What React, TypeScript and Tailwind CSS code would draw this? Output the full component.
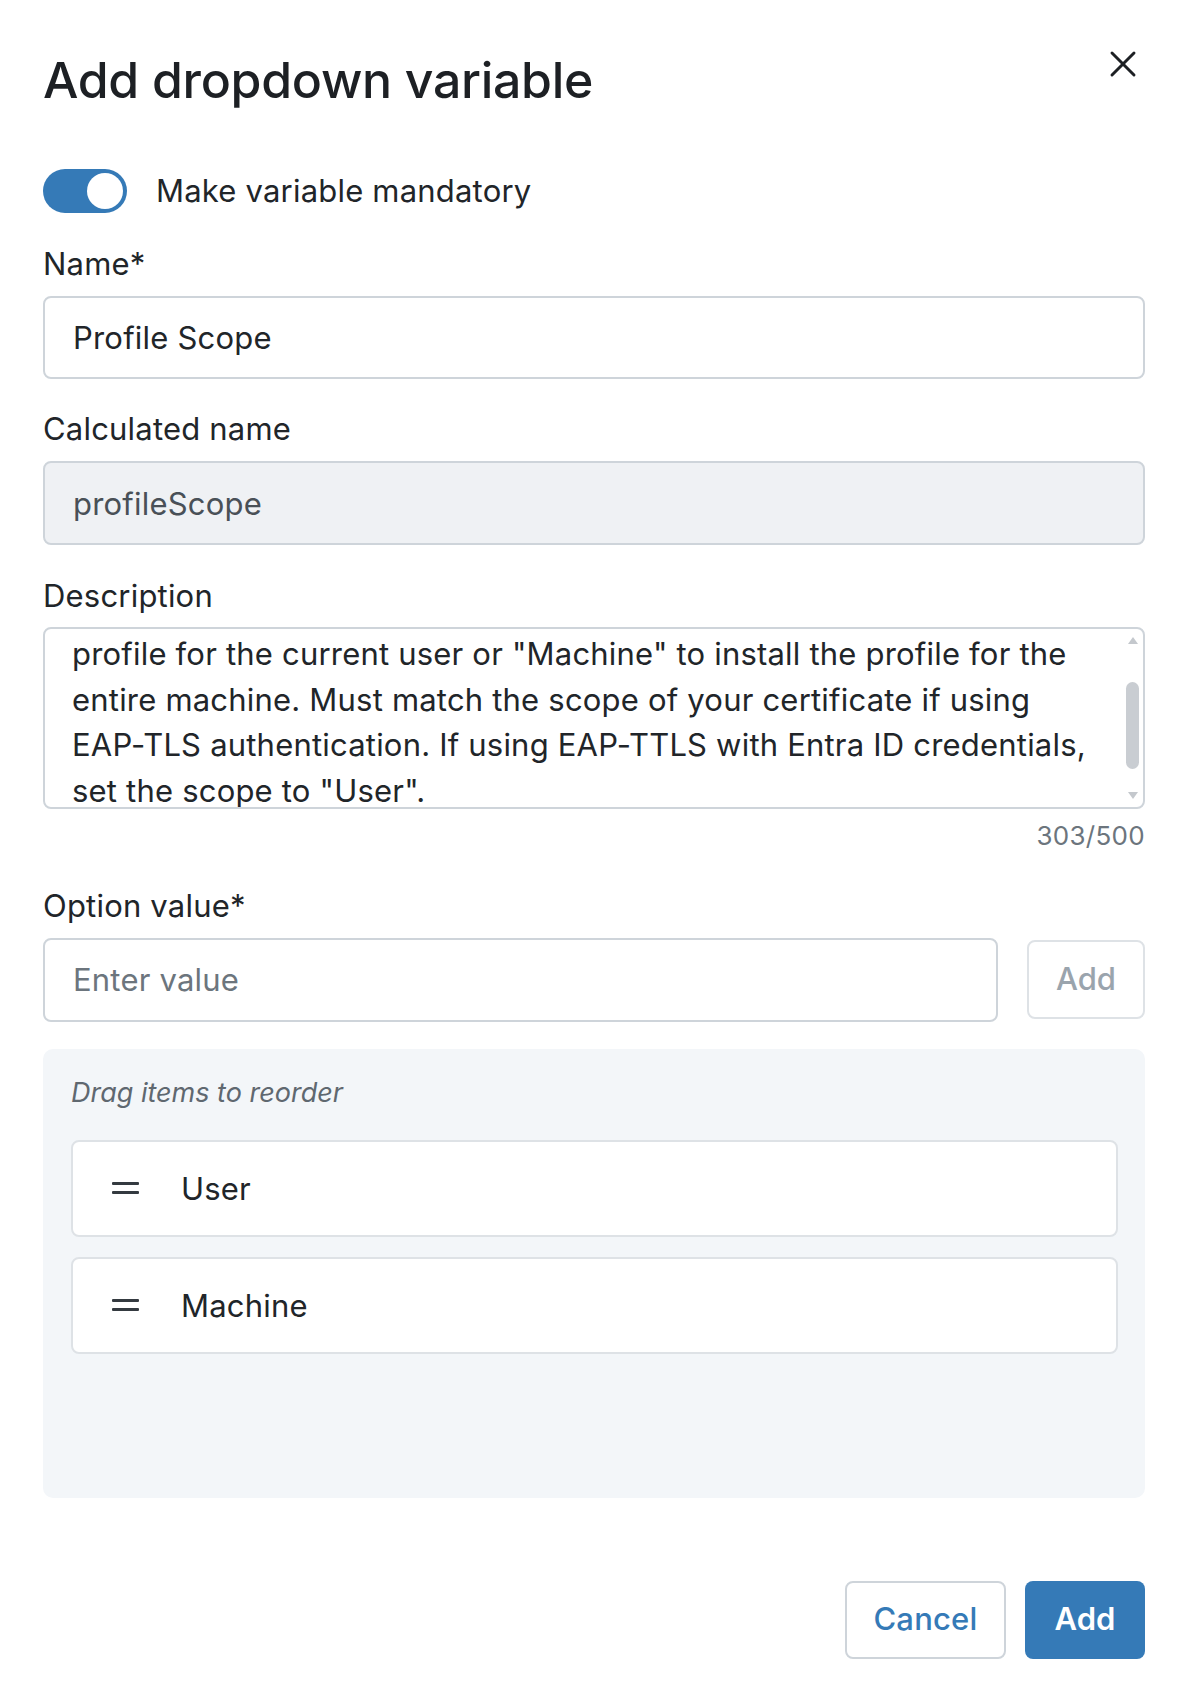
import { X } from "lucide-react";

const descriptionLines = [
  'profile for the current user or "Machine" to install the profile for the',
  "entire machine. Must match the scope of your certificate if using",
  "EAP-TLS authentication. If using EAP-TTLS with Entra ID credentials,",
  'set the scope to "User".',
];

const options = ["User", "Machine"];

function DragHandle() {
  return (
    <svg width="27" height="14" viewBox="0 0 27 14" aria-hidden="true">
      <rect x="0" y="1" width="27" height="3" rx="1" fill="#343a40" />
      <rect x="0" y="10" width="27" height="3" rx="1" fill="#343a40" />
    </svg>
  );
}

export default function App() {
  return (
    <div className="min-h-screen bg-white pl-[43px] pr-[34px] pt-[42px] pb-[31px] font-['Inter','Noto_Sans',sans-serif] text-[#212529]">
      <div className="flex items-start justify-between">
        <h1 className="mt-[8px] text-[50px] font-medium leading-[60px] tracking-[-0.3px] text-[#1d2024]">
          Add dropdown variable
        </h1>
        <button type="button" aria-label="Close" className="flex h-[44px] w-[44px] items-center justify-center text-[#1d2024]">
          <X size={44} strokeWidth={1.6} />
        </button>
      </div>

      {/* mandatory toggle */}
      <div className="mt-[58px] flex items-center gap-[29px]">
        <div className="flex h-[44px] w-[84px] items-center justify-end rounded-full bg-[#357ab7] px-[4px]">
          <div className="h-[36px] w-[36px] rounded-full bg-white" />
        </div>
        <span className="text-[31px] leading-[45px] tracking-[0.2px]">Make variable mandatory</span>
      </div>

      <label className="mt-[28px] mb-[10px] block text-[31px] leading-[45px] tracking-[0.2px]">Name*</label>
      <div className="flex h-[83px] items-center rounded-[8px] border-2 border-[#ced4da] px-[28px] text-[31px] leading-[45px] tracking-[0.2px]">
        Profile Scope
      </div>

      <label className="mt-[27px] mb-[10px] block text-[31px] leading-[45px] tracking-[0.2px]">Calculated name</label>
      <div className="flex h-[84px] items-center rounded-[8px] border-2 border-[#ced4da] bg-[#eff1f4] px-[28px] text-[31px] leading-[45px] tracking-[0.2px] text-[#495057]">
        profileScope
      </div>

      <label className="mt-[28px] mb-[9px] block text-[31px] leading-[45px] tracking-[0.2px]">Description</label>
      <div className="flex h-[182px] overflow-hidden rounded-[8px] border-2 border-[#ced4da] pl-[27px] pr-[4px]">
        <div className="flex-1 overflow-hidden pt-[2px] text-[31px] leading-[45.5px] tracking-[0.2px]">
          {descriptionLines.map((line) => (
            <div key={line} className="whitespace-nowrap">
              {line}
            </div>
          ))}
        </div>
        <div className="flex w-[13px] flex-col items-center pt-[8px] pb-[8px]">
          <div className="h-0 w-0 border-x-[5px] border-b-[7px] border-x-transparent border-b-[#c4c8cd]" />
          <div className="mt-[38px] h-[87px] w-[13px] rounded-full bg-[#c9cdd2]" />
          <div className="mt-auto h-0 w-0 border-x-[5px] border-t-[7px] border-x-transparent border-t-[#c4c8cd]" />
        </div>
      </div>
      <div className="mt-[8px] text-right text-[26px] leading-[37.5px] tracking-[0.3px] text-[#6c757d]">303/500</div>

      <label className="mt-[28px] mb-[10px] block text-[31px] leading-[45px] tracking-[0.2px]">Option value*</label>
      <div className="flex items-center gap-[29px]">
        <div className="flex h-[84px] flex-1 items-center rounded-[8px] border-2 border-[#ced4da] px-[28px] text-[31px] leading-[45px] tracking-[0.2px] text-[#6c757d]">
          Enter value
        </div>
        <button type="button" className="h-[79px] w-[118px] rounded-[8px] border-2 border-[#dee2e6] text-[31px] font-medium text-[#9aa4ad]">
          Add
        </button>
      </div>

      {/* reorder list */}
      <div className="mt-[27px] h-[449px] rounded-[10px] bg-[#f3f6f9] pt-[24px] pl-[28px] pr-[27px]">
        <p className="text-[27px] italic leading-[40px] text-[#5f6870]">Drag items to reorder</p>
        <div className="mt-[27px] flex flex-col gap-[20px]">
          {options.map((opt) => (
            <div
              key={opt}
              className="flex h-[97px] items-center gap-[42px] rounded-[8px] border-2 border-[#dee2e6] bg-white pl-[39px] text-[31px] leading-[45px] tracking-[0.2px]"
            >
              <DragHandle />
              <span>{opt}</span>
            </div>
          ))}
        </div>
      </div>

      <div className="mt-[83px] flex justify-end gap-[19px]">
        <button type="button" className="h-[78px] w-[161px] rounded-[8px] border-2 border-[#ced4da] text-[31px] font-medium tracking-[0.2px] text-[#357ab7]">
          Cancel
        </button>
        <button type="button" className="h-[78px] w-[120px] rounded-[8px] bg-[#357ab7] text-[31px] font-semibold text-white">
          Add
        </button>
      </div>
    </div>
  );
}
